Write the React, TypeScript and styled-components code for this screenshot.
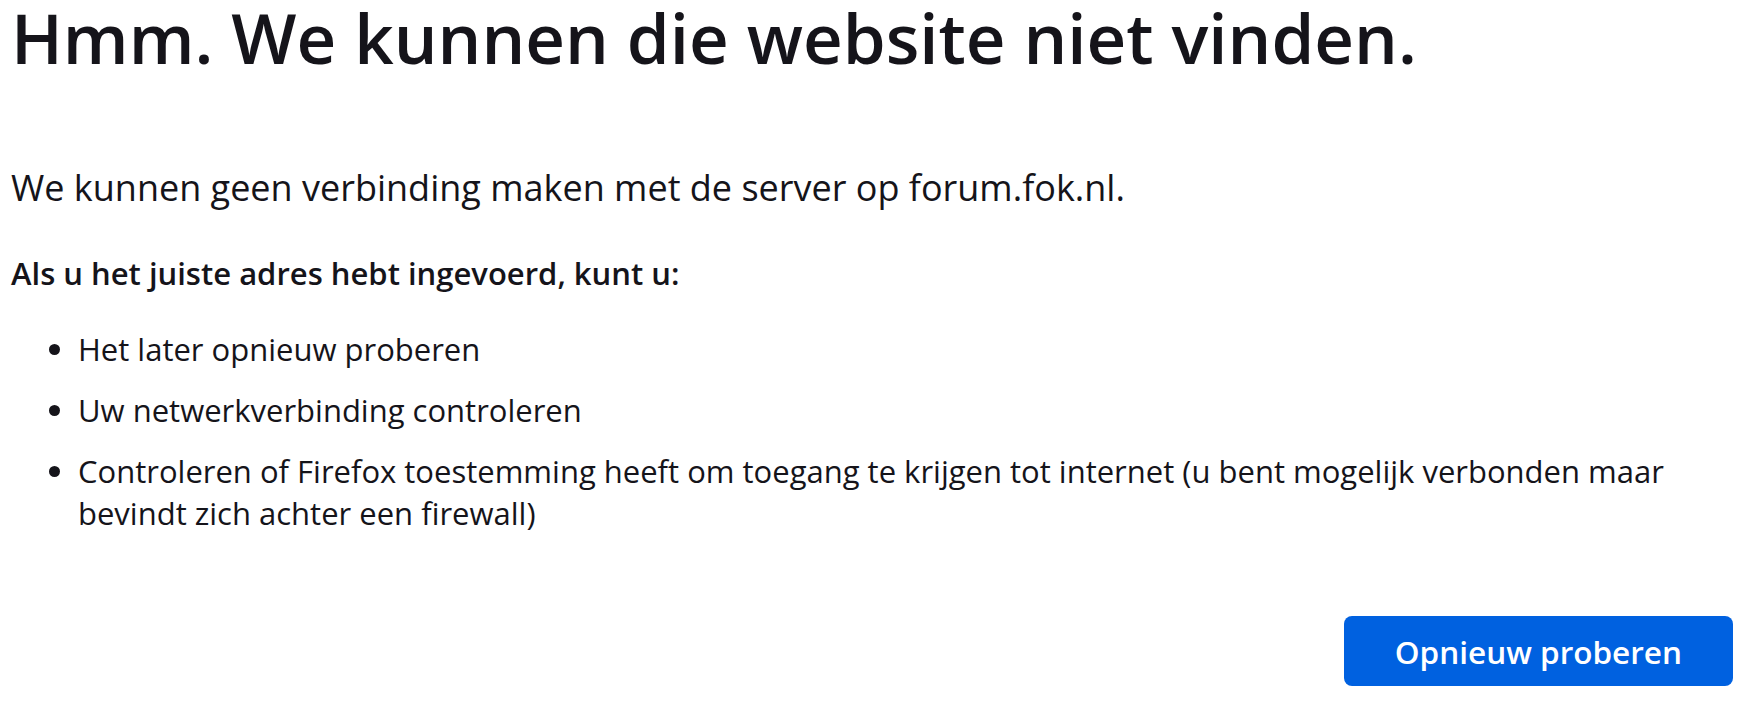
import React from 'react';
import styled, {createGlobalStyle} from 'styled-components';

const textColor = '#15141a';
const blueColor = '#0061e0';

const GlobalStyle = createGlobalStyle`
    html, body {
        margin: 0;
        padding: 0;
        background: #ffffff;
    }
    body {
        font-family: "Open Sans", "Noto Sans", sans-serif;
        color: ${textColor};
    }
`

const Page = styled.main`
    display: flex;
    flex-direction: column;
    padding: 0 13px 0 11px;
`

const Title = styled.h1`
    margin: 0;
    font-size: 69px;
    line-height: 74px;
    font-weight: 600;
`

// korte omschrijving staat groter dan de rest
const ShortDesc = styled.p`
    margin: 92px 0 0;
    font-size: 36px;
    line-height: 44px;
`

const Hint = styled.p`
    margin: 43px 0 0;
    font-size: 31px;
    line-height: 40px;
    font-weight: 600;
`

const List = styled.ul`
    margin: 35px 0 0;
    padding-left: 67px;
    list-style: disc;
    display: flex;
    flex-direction: column;
    gap: 19px;
`

const Item = styled.li`
    font-size: 31px;
    line-height: 42px;
`

const Actions = styled.div`
    display: flex;
    justify-content: flex-end;
    margin-top: 82px;
`

const RetryButton = styled.button`
    height: 70px;
    padding: 0 51px;
    border: none;
    border-radius: 8px;
    background-color: ${blueColor};
    color: #ffffff;
    font-family: inherit;
    font-size: 31.5px;
    font-weight: 600;
    cursor: pointer;
`

const App = () => {
    return (
        <>
            <GlobalStyle/>
            <Page>
                <Title>Hmm. We kunnen die website niet vinden.</Title>
                <ShortDesc>We kunnen geen verbinding maken met de server op forum.fok.nl.</ShortDesc>
                <Hint>Als u het juiste adres hebt ingevoerd, kunt u:</Hint>
                <List>
                    <Item>Het later opnieuw proberen</Item>
                    <Item>Uw netwerkverbinding controleren</Item>
                    <Item>Controleren of Firefox toestemming heeft om toegang te krijgen tot internet (u bent mogelijk verbonden maar bevindt zich achter een firewall)</Item>
                </List>
                <Actions>
                    <RetryButton>Opnieuw proberen</RetryButton>
                </Actions>
            </Page>
        </>
    );
};

export default App;
